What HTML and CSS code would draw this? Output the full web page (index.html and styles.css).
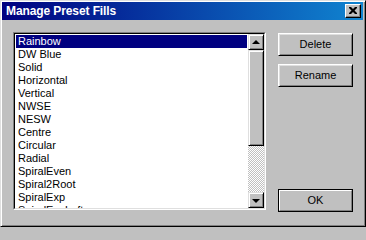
FILE: index.html
```html
<!DOCTYPE html>
<html>
<head>
<meta charset="utf-8">
<link rel="stylesheet" href="styles.css">
</head>
<body>
<div class="window">
  <div class="titlebar">
    <span class="title">Manage Preset Fills</span>
    <div class="close">
      <svg width="8" height="7" viewBox="0 0 8 7"><path d="M0 0h2l2 2 2-2h2v1l-2.5 2.5L8 6v1H6L4 5 2 7H0V6l2.5-2.5L0 1z" fill="#000"/></svg>
    </div>
  </div>
  <div class="content">
    <div class="listbox">
      <div class="listbox-inner">
        <ul class="items">
          <li class="item selected">Rainbow</li>
          <li class="item">DW Blue</li>
          <li class="item">Solid</li>
          <li class="item">Horizontal</li>
          <li class="item">Vertical</li>
          <li class="item">NWSE</li>
          <li class="item">NESW</li>
          <li class="item">Centre</li>
          <li class="item">Circular</li>
          <li class="item">Radial</li>
          <li class="item">SpiralEven</li>
          <li class="item">Spiral2Root</li>
          <li class="item">SpiralExp</li>
          <li class="item">SpiralExpLeft</li>
        </ul>
        <div class="scrollbar">
          <div class="sb-btn"><span class="arrow-up"></span></div>
          <div class="thumb"></div>
          <div class="track"></div>
          <div class="sb-btn"><span class="arrow-down"></span></div>
        </div>
      </div>
    </div>
    <div class="actions">
      <div class="btn">Delete</div>
      <div class="btn">Rename</div>
      <div class="btn default"><span class="btn-face">OK</span></div>
    </div>
  </div>
</div>
</body>
</html>
```
FILE: styles.css
```css
html, body {
  margin: 0;
  padding: 0;
  background: #c0c0c0;
}
body {
  width: 366px;
  height: 227px;
  overflow: hidden;
  font-family: "Liberation Sans", Arial, sans-serif;
  font-size: 11px;
  color: #000;
}
.window {
  box-sizing: border-box;
  width: 366px;
  height: 227px;
  background: #c0c0c0;
  border: 1px solid;
  border-color: #dfdfdf #000 #000 #dfdfdf;
  box-shadow: inset 1px 1px #fff, inset -1px -1px #808080;
  padding: 1px 2px 2px 1px;
}
.titlebar {
  height: 18px;
  background: linear-gradient(to right, #000080, #1084d0);
  display: flex;
  align-items: center;
  justify-content: space-between;
  padding: 0 2px 0 4px;
}
.title {
  color: #fff;
  font-weight: bold;
  font-size: 12px;
  line-height: 18px;
  letter-spacing: -0.1px;
}
.close {
  box-sizing: border-box;
  width: 16px;
  height: 14px;
  background: #c0c0c0;
  border: 1px solid;
  border-color: #fff #000 #000 #fff;
  box-shadow: inset -1px -1px #808080;
  display: flex;
  align-items: center;
  justify-content: center;
  padding: 0 1px 1px 0;
}
.close svg {
  display: block;
}
.content {
  display: flex;
  gap: 12px;
  margin-top: 12px;
  padding-left: 11px;
}
.listbox {
  box-sizing: border-box;
  width: 253px;
  height: 178px;
  border: 1px solid;
  border-color: #808080 #fff #fff #808080;
}
.listbox-inner {
  box-sizing: border-box;
  height: 100%;
  border: 1px solid;
  border-color: #000 #dfdfdf #dfdfdf #000;
  background: #fff;
  display: flex;
}
.items {
  flex: 1;
  list-style: none;
  margin: 0;
  padding: 1px 1px 0 1px;
  overflow: hidden;
}
.item {
  height: 13px;
  line-height: 13px;
  padding-left: 2px;
  white-space: nowrap;
}
.item.selected {
  background: #000080;
  color: #fff;
}
.scrollbar {
  width: 16px;
  display: flex;
  flex-direction: column;
}
.sb-btn, .thumb {
  box-sizing: border-box;
  background: #c0c0c0;
  border: 1px solid;
  border-color: #dfdfdf #000 #000 #dfdfdf;
  box-shadow: inset 1px 1px #fff, inset -1px -1px #808080;
}
.sb-btn {
  height: 16px;
  display: flex;
  align-items: center;
  justify-content: center;
}
.arrow-up, .arrow-down {
  width: 0;
  height: 0;
  border-left: 4px solid transparent;
  border-right: 4px solid transparent;
}
.arrow-up {
  border-bottom: 4px solid #000;
  margin-bottom: 1px;
}
.arrow-down {
  border-top: 4px solid #000;
  margin-top: 1px;
}
.thumb {
  height: 96px;
}
.track {
  flex: 1;
  background: repeating-conic-gradient(#c0c0c0 0 25%, #fff 0 50%) 0 0 / 2px 2px;
}
.actions {
  display: flex;
  flex-direction: column;
  gap: 8px;
  padding-top: 1px;
  height: 180px;
  box-sizing: border-box;
}
.btn {
  box-sizing: border-box;
  width: 75px;
  height: 23px;
  background: #c0c0c0;
  border: 1px solid;
  border-color: #fff #000 #000 #fff;
  box-shadow: inset 1px 1px #dfdfdf, inset -1px -1px #808080;
  display: flex;
  align-items: center;
  justify-content: center;
  line-height: 13px;
}
.btn.default {
  margin-top: auto;
  border: 1px solid #000;
  box-shadow: none;
  padding: 0;
}
.btn-face {
  box-sizing: border-box;
  width: 100%;
  height: 100%;
  border: 1px solid;
  border-color: #fff #808080 #808080 #fff;
  display: flex;
  align-items: center;
  justify-content: center;
}
```
